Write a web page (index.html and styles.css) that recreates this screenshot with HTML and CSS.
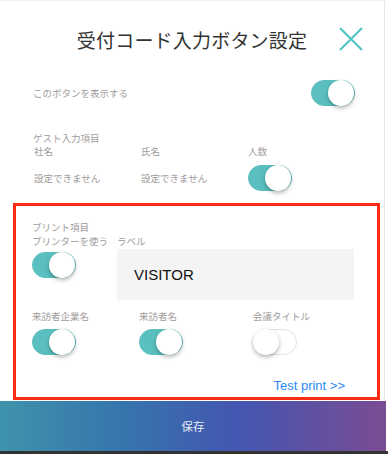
FILE: index.html
```html
<!DOCTYPE html>
<html lang="ja">
<head>
    <meta charset="UTF-8">
    <meta name="viewport" content="width=device-width, initial-scale=1.0">
    <title>受付コード入力ボタン設定</title>
    <link rel="stylesheet" href="styles.css">
</head>
<body>
    <div class="screen">
        <div class="header">
            <span></span>
            <h1 class="title">受付コード入力ボタン設定</h1>
            <button class="close" aria-label="閉じる">
                <svg width="24" height="24" viewBox="0 0 24 24">
                    <path d="M1 1 L23 23 M23 1 L1 23" stroke="#4ec3c3" stroke-width="2" fill="none"/>
                </svg>
            </button>
        </div>

        <div class="row show-row">
            <span class="label">このボタンを表示する</span>
            <div class="toggle on"><span class="knob"></span></div>
        </div>

        <div class="guest">
            <div class="label">ゲスト入力項目</div>
            <div class="cols">
                <div class="col">
                    <div class="label">社名</div>
                    <div class="value">設定できません</div>
                </div>
                <div class="col">
                    <div class="label">氏名</div>
                    <div class="value">設定できません</div>
                </div>
                <div class="col">
                    <div class="label">人数</div>
                    <div class="value"><div class="toggle on"><span class="knob"></span></div></div>
                </div>
            </div>
        </div>

        <div class="print-box">
            <div class="label">プリント項目</div>
            <div class="print-top">
                <div class="printer">
                    <div class="label">プリンターを使う</div>
                    <div class="toggle on"><span class="knob"></span></div>
                </div>
                <div class="label-field">
                    <div class="label">ラベル</div>
                    <div class="field">VISITOR</div>
                </div>
            </div>
            <div class="print-items">
                <div class="item">
                    <div class="label">来訪者企業名</div>
                    <div class="toggle on"><span class="knob"></span></div>
                </div>
                <div class="item">
                    <div class="label">来訪者名</div>
                    <div class="toggle on"><span class="knob"></span></div>
                </div>
                <div class="item">
                    <div class="label">会議タイトル</div>
                    <div class="toggle"><span class="knob"></span></div>
                </div>
            </div>
            <div class="test-print"><a href="#">Test print &gt;&gt;</a></div>
        </div>

        <button class="save">保存</button>
    </div>
    <div class="bottom-edge"></div>
</body>
</html>
```

FILE: styles.css
```css
body {
    margin: 0;
    background: #fff;
    font-family: "Noto Sans CJK JP", "Noto Sans", sans-serif;
    overflow: hidden;
}
.screen {
    width: 385px;
    border-right: 1px solid #e6e6e6;
    border-top: 1px solid #f0f0f0;
    box-sizing: border-box;
}
.header {
    display: grid;
    grid-template-columns: 1fr auto 1fr;
    align-items: center;
    height: 77px;
}
.title {
    margin: 0;
    font-size: 19px;
    font-weight: normal;
    color: #333;
    letter-spacing: 0.2px;
}
.close {
    justify-self: end;
    margin-right: 21px;
    padding: 0;
    border: none;
    background: none;
    width: 24px;
    height: 24px;
    margin-top: -2px;
}
.label {
    font-size: 9.5px;
    line-height: 14px;
    color: #a09b9b;
}
.row {
    display: flex;
    align-items: center;
    justify-content: space-between;
}
.show-row {
    height: 30px;
    padding: 0 29px 0 33px;
}
.guest {
    padding: 23px 0 0 33px;
}
.cols {
    display: flex;
}
.col {
    width: 107px;
}
.col .label {
    line-height: 13px;
    padding-left: 1px;
}
.value {
    height: 27px;
    margin-top: 6px;
    display: flex;
    align-items: center;
    font-size: 9.5px;
    color: #a09b9b;
    padding-left: 1px;
}

.toggle {
    position: relative;
    width: 44px;
    height: 26px;
    border-radius: 13px;
    background: #fff;
    border: 1px solid #e2e2e2;
    box-sizing: border-box;
}
.toggle.on {
    background: #5bbfbf;
    border-color: #5bbfbf;
}
.knob {
    position: absolute;
    top: -1px;
    left: -1px;
    width: 26px;
    height: 26px;
    border-radius: 50%;
    background: #fff;
    box-shadow: 0 2px 4px rgba(0, 0, 0, 0.3);
}
.toggle.on .knob {
    left: 16px;
}

.print-box {
    margin: 12px 4px 0 13px;
    border: 3px solid #ff2a12;
    padding: 14px 0 0 16px;
    height: 197px;
    box-sizing: border-box;
}
.print-top {
    display: flex;
}
.printer {
    width: 85px;
}
.printer .toggle {
    margin-top: 4px;
}
.label-field {
    flex: 0 0 237px;
}
.field {
    margin-top: 1px;
    height: 51px;
    background: #f4f4f4;
    display: flex;
    align-items: center;
    padding-left: 17px;
    font-family: "Liberation Sans", Arial, sans-serif;
    font-size: 15px;
    color: #111;
}
.print-items {
    display: flex;
    margin-top: 9px;
}
.item {
    width: 107px;
}
.item:nth-child(2) {
    width: 114px;
}
.item .toggle {
    margin-top: 6px;
}
.test-print {
    text-align: right;
    margin-top: 16px;
    padding-right: 32px;
}
.test-print a {
    font-family: "Liberation Sans", Arial, sans-serif;
    font-size: 13px;
    color: #2b8af0;
    text-decoration: none;
}

.save {
    display: block;
    width: 386px;
    height: 50px;
    margin-top: 1px;
    border: none;
    background: linear-gradient(to right, #3f93ab, #3676ad 30%, #4456b0 62%, #7a4c93);
    color: #e8ecf6;
    font-family: "Noto Sans CJK JP", sans-serif;
    font-size: 11.5px;
}
.bottom-edge {
    height: 4px;
    background: #333;
}
```
